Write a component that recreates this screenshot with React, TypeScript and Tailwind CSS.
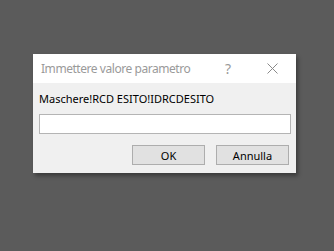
import React from 'react';

export default function App() {
  return (
    <div className="w-[334px] h-[251px] bg-[#5b5b5b] flex items-start justify-start pt-[54px] pl-[33px]" style={{ fontFamily: '"Noto Sans", "Open Sans", sans-serif' }}>
      {/* Dialog */}
      <div className="w-[263px] h-[119px] bg-[#f0f0f0] flex flex-col shadow-[2px_3px_4px_rgba(0,0,0,0.35)]">
        <div className="h-[29px] bg-white flex items-center pl-[8px] text-[#9a9a9a] whitespace-nowrap">
          <span className="text-[12px] tracking-[-0.45px] leading-none">Immettere valore parametro</span>
          <span className="ml-auto mr-[36px] text-[14px] leading-none">?</span>
          <svg width="11" height="11" viewBox="0 0 11 11" className="mr-[18px]">
            <path d="M0.5 0.5 L10.5 10.5 M10.5 0.5 L0.5 10.5" stroke="#8a8a8a" strokeWidth="1" fill="none" />
          </svg>
        </div>
        <div className="flex flex-col px-[6px]">
          <div className="text-[11px] text-black leading-none pt-[10px] h-[31px] whitespace-nowrap">Maschere!RCD ESITO!IDRCDESITO</div>
          <input className="h-[20px] w-[252px] bg-white border border-[#b4b4b4] outline-none" />
          <div className="flex justify-end gap-[11px] mt-[11px] pr-[1px]">
            <button className="w-[73px] h-[20px] bg-[#e1e1e1] border border-[#adadad] text-[11px] text-black leading-none">OK</button>
            <button className="w-[73px] h-[20px] bg-[#e1e1e1] border border-[#adadad] text-[11px] text-black leading-none">Annulla</button>
          </div>
        </div>
      </div>
    </div>
  );
}
